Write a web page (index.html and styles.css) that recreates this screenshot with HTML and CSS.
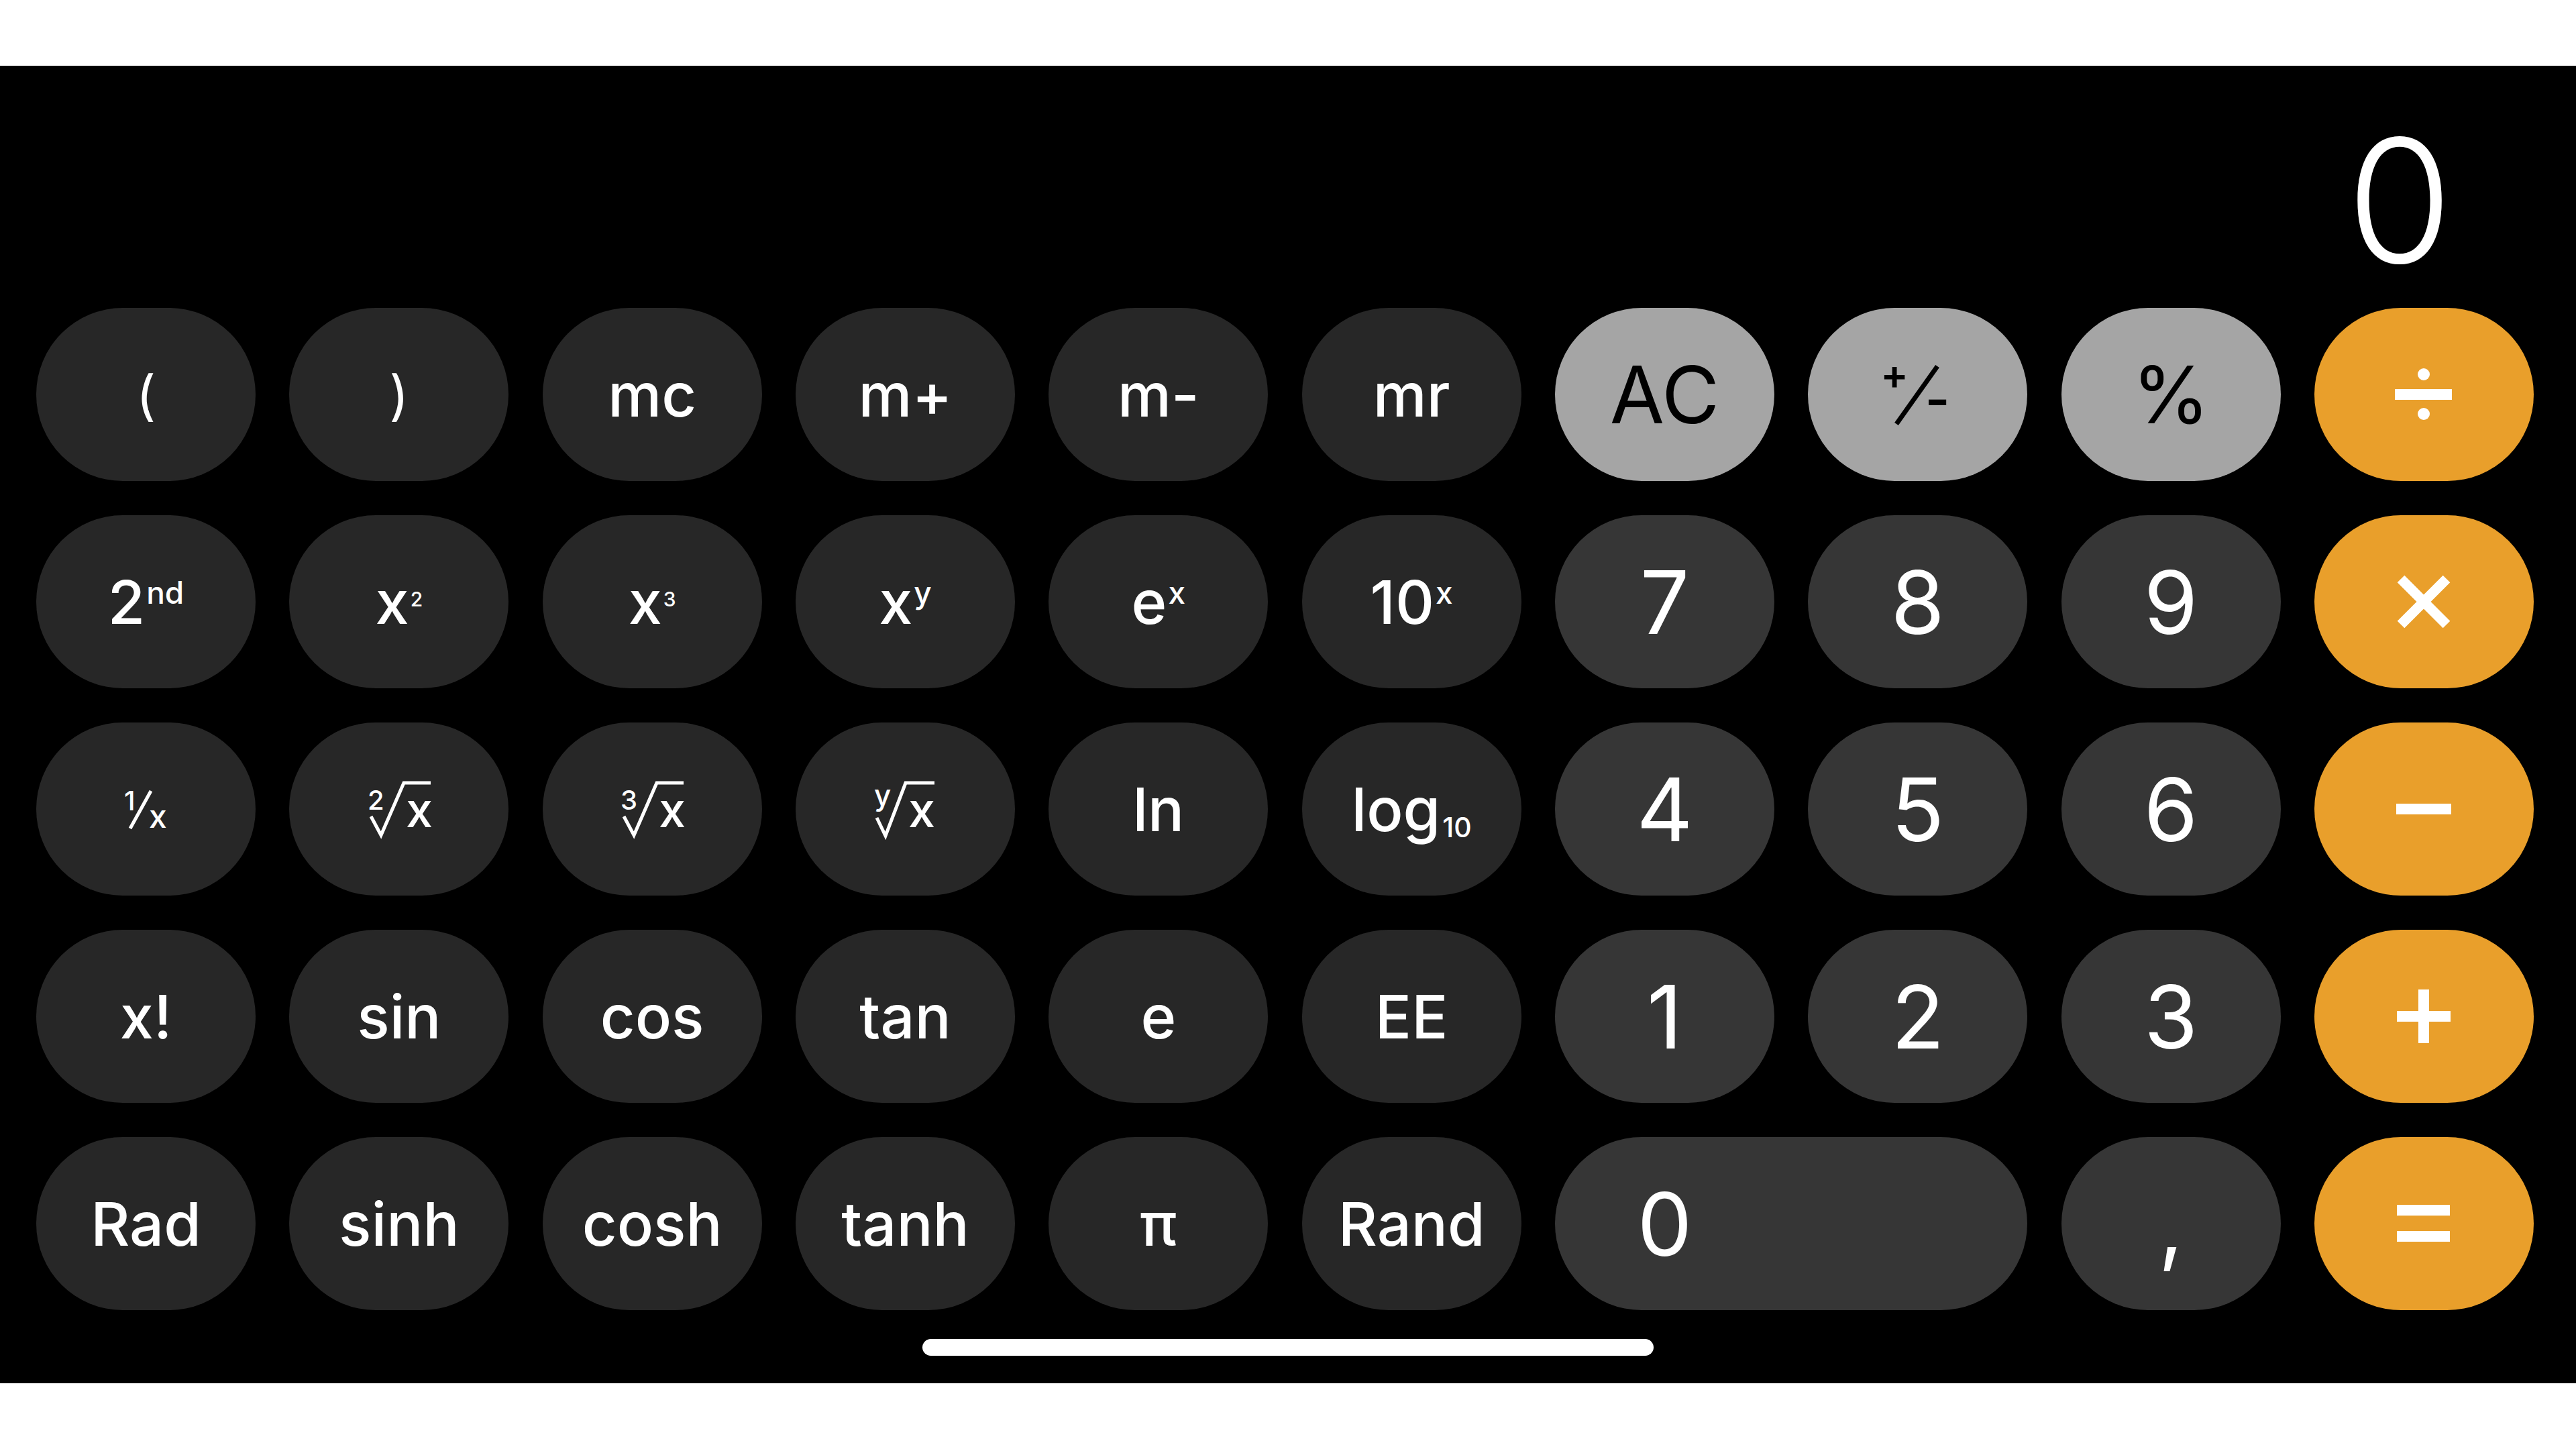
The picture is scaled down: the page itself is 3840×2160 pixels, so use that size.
FILE: index.html
```html
<!DOCTYPE html>
<html lang="en">
<head>
<meta charset="utf-8">
<title>Calculator</title>
<link rel="stylesheet" href="styles.css">
</head>
<body>
<div class="screen">
  <div class="display"><span class="result">0</span></div>
  <div class="keys">
    <!-- row 1 -->
    <div class="key fn"><span class="paren">(</span></div>
    <div class="key fn"><span class="paren">)</span></div>
    <div class="key fn">mc</div>
    <div class="key fn">m+</div>
    <div class="key fn">m-</div>
    <div class="key fn">mr</div>
    <div class="key gray">AC</div>
    <div class="key gray">
      <svg class="sym-pm" viewBox="0 0 110 100" width="110" height="100" aria-label="+/-">
        <text x="20" y="42" class="pm-plus" text-anchor="middle">+</text>
        <line x1="84" y1="8" x2="23" y2="94" class="pm-slash"/>
        <text x="84" y="86" class="pm-minus" text-anchor="middle">-</text>
      </svg>
    </div>
    <div class="key gray pct">%</div>
    <div class="key op">
      <svg viewBox="-50 -50 100 100" width="100" height="100" aria-label="divide">
        <rect x="-43" y="-8" width="85" height="16" class="w"/>
        <circle cx="0" cy="-30" r="9" class="w"/>
        <circle cx="0" cy="29" r="9" class="w"/>
      </svg>
    </div>
    <!-- row 2 -->
    <div class="key fn"><span class="txt">2<span class="sup">nd</span></span></div>
    <div class="key fn"><span class="txt">x<span class="sup sup-num">2</span></span></div>
    <div class="key fn"><span class="txt">x<span class="sup sup-num">3</span></span></div>
    <div class="key fn"><span class="txt">x<span class="sup">y</span></span></div>
    <div class="key fn"><span class="txt">e<span class="sup">x</span></span></div>
    <div class="key fn"><span class="txt">10<span class="sup">x</span></span></div>
    <div class="key num">7</div>
    <div class="key num">8</div>
    <div class="key num">9</div>
    <div class="key op">
      <svg viewBox="-50 -50 100 100" width="100" height="100" aria-label="multiply">
        <path d="M-34 -34 L34 34 M34 -34 L-34 34" class="ws" stroke-width="15"/>
      </svg>
    </div>
    <!-- row 3 -->
    <div class="key fn">
      <svg class="lbl" viewBox="-6 -6 84 78" width="84" height="78" aria-label="1/x">
        <text x="3" y="35" class="t40">1</text>
        <line x1="43" y1="6" x2="12" y2="62" class="ws" stroke-width="5"/>
        <text x="40" y="61" class="t48">x</text>
      </svg>
    </div>
    <div class="key fn">
      <svg class="lbl" viewBox="-6 -6 112 102" width="112" height="102" aria-label="square root">
        <text x="3" y="46" class="t40">2</text>
        <path d="M8 56 L23 84 L57 6 L97 6" class="ws rad"/>
        <text x="60" y="72" class="t72">x</text>
      </svg>
    </div>
    <div class="key fn">
      <svg class="lbl" viewBox="-6 -6 112 102" width="112" height="102" aria-label="cube root">
        <text x="3" y="46" class="t40">3</text>
        <path d="M8 56 L23 84 L57 6 L97 6" class="ws rad"/>
        <text x="60" y="72" class="t72">x</text>
      </svg>
    </div>
    <div class="key fn">
      <svg class="lbl" viewBox="-6 -6 112 102" width="112" height="102" aria-label="y root">
        <text x="4" y="40" class="t44">y</text>
        <path d="M8 58 L21 85 L51 6 L94 6" class="ws rad"/>
        <text x="55" y="72" class="t72">x</text>
      </svg>
    </div>
    <div class="key fn">ln</div>
    <div class="key fn"><span class="txt">log<span class="sub">10</span></span></div>
    <div class="key num">4</div>
    <div class="key num">5</div>
    <div class="key num">6</div>
    <div class="key op">
      <svg viewBox="-50 -50 100 100" width="100" height="100" aria-label="minus">
        <rect x="-41" y="-8" width="82" height="16" class="w"/>
      </svg>
    </div>
    <!-- row 4 -->
    <div class="key fn">x!</div>
    <div class="key fn">sin</div>
    <div class="key fn">cos</div>
    <div class="key fn">tan</div>
    <div class="key fn">e</div>
    <div class="key fn">EE</div>
    <div class="key num">1</div>
    <div class="key num">2</div>
    <div class="key num">3</div>
    <div class="key op">
      <svg viewBox="-50 -50 100 100" width="100" height="100" aria-label="plus">
        <rect x="-40" y="-8" width="80" height="16" class="w"/>
        <rect x="-8" y="-40" width="16" height="80" class="w"/>
      </svg>
    </div>
    <!-- row 5 -->
    <div class="key fn">Rad</div>
    <div class="key fn">sinh</div>
    <div class="key fn">cosh</div>
    <div class="key fn">tanh</div>
    <div class="key fn">π</div>
    <div class="key fn">Rand</div>
    <div class="key num wide"><span class="wide-label">0</span></div>
    <div class="key num">,</div>
    <div class="key op">
      <svg viewBox="-50 -50 100 100" width="100" height="100" aria-label="equals">
        <rect x="-40" y="-28" width="79" height="16" class="w"/>
        <rect x="-40" y="11" width="79" height="16" class="w"/>
      </svg>
    </div>
  </div>
  <div class="home"></div>
</div>
</body>
</html>
```

FILE: styles.css
```css
html, body {
  margin: 0;
  padding: 0;
  background: #ffffff;
}

body {
  width: 3840px;
  height: 2160px;
  overflow: hidden;
  font-family: Inter, "Noto Sans", "Liberation Sans", sans-serif;
}

.screen {
  margin-top: 98px;
  height: 1964px;
  background: #000000;
  display: flex;
  flex-direction: column;
}

.display {
  height: 361px;
  box-sizing: border-box;
  display: flex;
  align-items: flex-end;
  justify-content: flex-end;
  padding-right: 184px;
  padding-bottom: 32px;
}

.result {
  color: #ffffff;
  font-size: 256px;
  font-weight: 300;
  line-height: 1;
}

.keys {
  margin: 0 63px 0 54px;
  display: grid;
  grid-template-columns: repeat(10, 327px);
  grid-template-rows: repeat(5, 258px);
  column-gap: 50.33px;
  row-gap: 51px;
}

.key {
  border-radius: 129px;
  display: flex;
  align-items: center;
  justify-content: center;
  color: #ffffff;
  line-height: normal;
  white-space: nowrap;
}

.key svg {
  overflow: visible;
}

.fn {
  background: #272727;
  font-size: 90px;
  font-weight: 500;
}

.num {
  background: #363636;
  font-size: 130px;
  font-weight: 400;
}

.gray {
  background: #a5a5a5;
  color: #000000;
  font-size: 118px;
  font-weight: 400;
}

.op {
  background: #e99f2b;
}

.wide {
  grid-column: span 2;
  justify-content: flex-start;
}

.wide-label {
  width: 327px;
  text-align: center;
}

.paren {
  font-size: 80px;
  font-weight: 400;
}

.txt {
  display: inline-block;
  line-height: normal;
}

.sup {
  font-size: 46px;
  vertical-align: 30px;
  margin-left: 2px;
}

.sup-num {
  font-size: 30px;
  vertical-align: 26px;
}

.sub {
  font-size: 41px;
  vertical-align: -9px;
  margin-left: 3px;
}

.w {
  fill: #ffffff;
}

.ws {
  stroke: #ffffff;
  fill: none;
}

.rad {
  stroke-width: 5;
  stroke-linejoin: miter;
}

.lbl text {
  fill: #ffffff;
  font-family: Inter, "Noto Sans", sans-serif;
  font-weight: 500;
}

.t40 { font-size: 40px; }
.t44 { font-size: 44px; }
.t48 { font-size: 48px; }
.t72 { font-size: 72px; font-weight: 400; }

.sym-pm text {
  fill: #000000;
  font-family: Inter, "Noto Sans", sans-serif;
  font-weight: 600;
}

.pm-plus { font-size: 62px; }
.pm-minus { font-size: 80px; }

.pm-slash {
  stroke: #000000;
  stroke-width: 7;
}

.home {
  align-self: center;
  margin-top: 43px;
  width: 1090px;
  height: 25px;
  border-radius: 13px;
  background: #ffffff;
}
```
